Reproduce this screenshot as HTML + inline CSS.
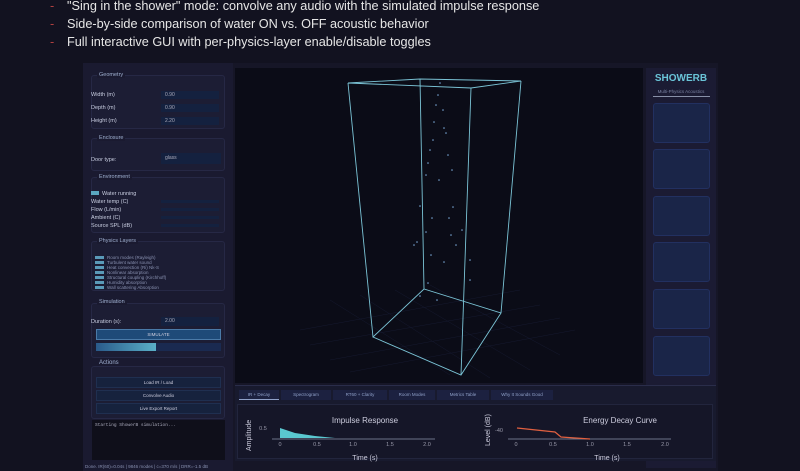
<!DOCTYPE html>
<html><head><meta charset="utf-8"><style>
*{margin:0;padding:0;box-sizing:border-box}
body{width:800px;height:471px;background:#121220;font-family:"Liberation Sans",sans-serif;overflow:hidden;position:relative;color:#ddd}
.b{position:absolute;left:50px;font-size:12.7px;color:#e6e6e6}
.b span{color:#b04040;display:inline-block;width:17px}
.app{position:absolute;left:83px;top:63px;width:635px;height:408px;background:#161627}
.lp{position:absolute;left:0;top:0;width:150px;height:408px;background:#1a1a30}
.g{position:absolute;left:8px;width:134px;border:1px solid #262845;border-radius:3px;background:#1c1d34}
.gt{position:absolute;left:8px;font-size:5.5px;color:#9fb0d0;background:#1a1a30;padding:0 2px}
.r{position:absolute;left:8px;font-size:5.5px;color:#c8cde0}
.in{position:absolute;left:78px;width:58px;height:8px;background:#14213f;font-size:5px;color:#aab;padding-left:4px;line-height:8px}
.lay{position:absolute;left:12px;font-size:4.5px;color:#8890b0}
.lay i{display:inline-block;width:9px;height:3px;background:#5a9ab8;margin-right:3px;vertical-align:middle}
.btn{position:absolute;left:13px;width:125px;height:11px;background:#16223d;border:1px solid #1f2f50;font-size:4.5px;color:#ccd;text-align:center;line-height:10px}
.view{position:absolute;left:152px;top:5px;width:408px;height:315px;background:#0b0c17}
.rs{position:absolute;left:563px;top:5px;width:70px;height:400px;background:#1b1b33}
.card{position:absolute;left:7px;width:57px;height:40px;background:#1a2548;border:1px solid #223060;border-radius:3px}
.bot{position:absolute;left:152px;top:322px;width:481px;height:76px;background:#181a2e;border-top:1px solid #2a2d4a}
.tab{position:absolute;top:4px;height:10px;font-size:4.5px;color:#8fa0c8;line-height:10px;text-align:center;background:#1c2140}
</style></head><body>
<div class="b" style="top:-1px"><span>-</span>"Sing in the shower" mode: convolve any audio with the simulated impulse response</div>
<div class="b" style="top:17px"><span>-</span>Side-by-side comparison of water ON vs. OFF acoustic behavior</div>
<div class="b" style="top:35px"><span>-</span>Full interactive GUI with per-physics-layer enable/disable toggles</div>
<div class="app">
<div class="lp">
 <div class="g" style="top:12px;height:54px"></div><div class="gt" style="top:9px;left:14px">Geometry</div>
 <div class="r" style="top:29px">Width (m)</div><div class="in" style="top:28px">0.90</div>
 <div class="r" style="top:42px">Depth (m)</div><div class="in" style="top:41px">0.90</div>
 <div class="r" style="top:55px">Height (m)</div><div class="in" style="top:54px">2.20</div>
 <div class="g" style="top:75px;height:33px"></div><div class="gt" style="top:72px;left:14px">Enclosure</div>
 <div class="r" style="top:94px">Door type:</div><div class="in" style="top:90px;height:11px;line-height:11px;width:60px">glass</div>
 <div class="g" style="top:114px;height:56px"></div><div class="gt" style="top:111px;left:14px">Environment</div>
 <div class="r" style="top:128px"><span style="display:inline-block;width:8px;height:4px;background:#5aa6c0;margin-right:3px"></span>Water running</div>
 <div class="r" style="top:136px">Water temp (C)</div><div class="in" style="top:137px;height:3px"></div>
 <div class="r" style="top:144px">Flow (L/min)</div><div class="in" style="top:145px;height:3px"></div>
 <div class="r" style="top:152px">Ambient (C)</div><div class="in" style="top:153px;height:3px"></div>
 <div class="r" style="top:160px">Source SPL (dB)</div><div class="in" style="top:161px;height:3px"></div>
 <div class="g" style="top:178px;height:50px"></div><div class="gt" style="top:175px;left:14px">Physics Layers</div>
 <div class="lay" style="top:192px"><i></i>Room modes (Rayleigh)</div>
 <div class="lay" style="top:197px"><i></i>Turbulent water sound</div>
 <div class="lay" style="top:202px"><i></i>Heat convection (Ri) Nk-S</div>
 <div class="lay" style="top:207px"><i></i>Nonlinear absorption</div>
 <div class="lay" style="top:212px"><i></i>Structural coupling (Kirchhoff)</div>
 <div class="lay" style="top:217px"><i></i>Humidity absorption</div>
 <div class="lay" style="top:222px"><i></i>Wall scattering Absorption</div>
 <div class="g" style="top:240px;height:55px"></div><div class="gt" style="top:236px;left:14px">Simulation</div>
 <div class="r" style="top:256px">Duration (s):</div><div class="in" style="top:254px;height:9px">2.00</div>
 <div class="btn" style="top:266px;background:#1e4a78;border-color:#4a7aa8">SIMULATE</div>
 <div style="position:absolute;left:13px;top:280px;width:125px;height:8px;background:#1a2a50"><div style="width:60px;height:8px;background:linear-gradient(90deg,#2a5a8a,#5ab0c8)"></div></div>
 <div class="g" style="top:303px;height:53px"></div><div class="gt" style="top:297px;left:14px;font-size:6px">Actions</div>
 <div class="btn" style="top:314px">Load IR / Load</div>
 <div class="btn" style="top:327px">Convolve Audio</div>
 <div class="btn" style="top:340px">Live Export Report</div>
 <div style="position:absolute;left:9px;top:357px;width:133px;height:40px;background:#0f0f1a;font-family:'Liberation Mono',monospace;font-size:4.5px;color:#aab;padding:3px">Starting ShowerB simulation...</div>
 <div style="position:absolute;left:2px;top:401px;font-size:4.5px;color:#8890b0;white-space:nowrap">Done. IR(60)=0.04s | 9846 modes | c=370 m/s | DRR=-1.5 dB</div>
</div>
<div class="view">
<svg width="408" height="315" viewBox="235 68 408 315" style="position:absolute;left:0;top:0">
<g stroke="#1a1f3a" stroke-width="0.5" opacity="0.7">
<path d="M300 330 L520 290 M310 345 L540 305 M330 360 L560 318 M350 372 L575 330 M330 300 L450 375 M360 295 L490 378 M395 290 L530 370 M430 285 L560 355"/>
</g>
<g stroke="#7bc4d6" stroke-width="0.9" fill="none">
<path d="M348 83 L420 79 L521 81 L471 88 Z M373 337 L424 289 L501 313 L461 375 Z M348 83 L373 337 M420 79 L424 289 M521 81 L501 313 M471 88 L461 375"/>
</g>
<g fill="#7aa8d8">
<circle cx="440" cy="83" r="0.8"/><circle cx="438" cy="95" r="0.8"/><circle cx="436" cy="105" r="0.8"/><circle cx="443" cy="110" r="0.8"/><circle cx="434" cy="122" r="0.8"/><circle cx="444" cy="128" r="0.8"/><circle cx="433" cy="140" r="0.8"/><circle cx="446" cy="133" r="0.8"/><circle cx="430" cy="150" r="0.8"/><circle cx="448" cy="155" r="0.8"/><circle cx="428" cy="163" r="0.8"/><circle cx="452" cy="170" r="0.8"/><circle cx="426" cy="175" r="0.8"/><circle cx="439" cy="180" r="0.8"/><circle cx="420" cy="206" r="0.8"/><circle cx="453" cy="207" r="0.8"/><circle cx="449" cy="218" r="0.8"/><circle cx="432" cy="218" r="0.8"/><circle cx="417" cy="242" r="0.8"/><circle cx="426" cy="232" r="0.8"/><circle cx="451" cy="235" r="0.8"/><circle cx="431" cy="255" r="0.8"/><circle cx="456" cy="245" r="0.8"/><circle cx="444" cy="262" r="0.8"/><circle cx="470" cy="260" r="0.8"/><circle cx="428" cy="283" r="0.8"/><circle cx="470" cy="280" r="0.8"/><circle cx="420" cy="296" r="0.8"/><circle cx="437" cy="300" r="0.8"/><circle cx="414" cy="245" r="0.8"/><circle cx="462" cy="230" r="0.8"/>
</g>
</svg>
</div>
<div class="rs">
 <div style="position:absolute;left:0;top:5px;width:70px;text-align:center;font-size:10px;font-weight:bold;color:#6ac4d8">SHOWERB</div>
 <div style="position:absolute;left:0;top:21px;width:70px;text-align:center;font-size:4.5px;color:#7880a0">Multi-Physics Acoustics</div>
 <div style="position:absolute;left:7px;top:28px;width:57px;height:1px;background:#8890a8"></div>
 <div class="card" style="top:35px"></div><div class="card" style="top:81px"></div><div class="card" style="top:128px"></div><div class="card" style="top:174px"></div><div class="card" style="top:221px"></div><div class="card" style="top:268px"></div>
</div>
<div class="bot">
 <div class="tab" style="left:4px;width:40px;border-bottom:1px solid #8fa0c8">IR + Decay</div>
 <div class="tab" style="left:46px;width:50px">Spectrogram</div>
 <div class="tab" style="left:98px;width:54px">RT60 + Clarity</div>
 <div class="tab" style="left:154px;width:46px">Room Modes</div>
 <div class="tab" style="left:202px;width:52px">Metrics Table</div>
 <div class="tab" style="left:256px;width:62px">Why It Sounds Good</div>
 <div style="position:absolute;left:2px;top:18px;width:476px;height:55px;background:#151628;border:1px solid #22253d"></div>
 <svg width="481" height="76" style="position:absolute;left:0;top:0" font-family="Liberation Sans,sans-serif" fill="#ccd">
  <text x="130" y="37" font-size="8" text-anchor="middle">Impulse Response</text>
  <text x="385" y="37" font-size="8" text-anchor="middle">Energy Decay Curve</text>
  <text x="130" y="74" font-size="7" text-anchor="middle">Time (s)</text>
  <text x="372" y="74" font-size="7" text-anchor="middle">Time (s)</text>
  <text transform="translate(16,65) rotate(-90)" font-size="7">Amplitude</text>
  <text transform="translate(255,60) rotate(-90)" font-size="7">Level (dB)</text>
  <line x1="37" y1="53" x2="200" y2="53" stroke="#8890a8" stroke-width="0.8"/>
  <line x1="273" y1="53" x2="436" y2="53" stroke="#8890a8" stroke-width="0.8"/>
  <path d="M45 52 L45 42 L60 47 L80 50 L100 52 Z" fill="#5ac8d0"/>
  <path d="M282 42 L320 46 L326 51 L355 53" stroke="#e06040" stroke-width="1.2" fill="none"/>
  <g font-size="5.5" fill="#99a" text-anchor="middle">
   <text x="45" y="60">0</text><text x="82" y="60">0.5</text><text x="118" y="60">1.0</text><text x="155" y="60">1.5</text><text x="192" y="60">2.0</text>
   <text x="281" y="60">0</text><text x="318" y="60">0.5</text><text x="355" y="60">1.0</text><text x="392" y="60">1.5</text><text x="430" y="60">2.0</text>
   <text x="28" y="44">0.5</text><text x="264" y="46">-40</text>
  </g>
 </svg>
</div>
</div>
</body></html>
